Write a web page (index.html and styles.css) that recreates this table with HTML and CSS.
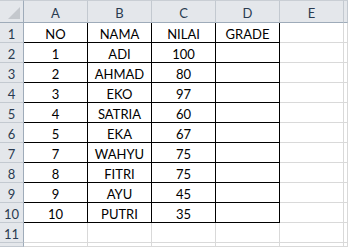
FILE: index.html
```html
<!DOCTYPE html>
<html>
<head>
<meta charset="utf-8">
<link rel="stylesheet" href="styles.css">
</head>
<body>
<div class="sheet">
  <div class="corner"><svg class="tri" width="12" height="12" viewBox="0 0 12 12"><polygon points="12,0 12,12 0,12" fill="#c4c8cd"/></svg></div>
  <div class="ch">A</div><div class="ch">B</div><div class="ch">C</div><div class="ch">D</div><div class="ch">E</div><div class="ch last"></div>

  <div class="rh">1</div><div class="c b">NO</div><div class="c b">NAMA</div><div class="c b">NILAI</div><div class="c b">GRADE</div><div class="c"></div><div class="c"></div>
  <div class="rh">2</div><div class="c b">1</div><div class="c b">ADI</div><div class="c b">100</div><div class="c b"></div><div class="c"></div><div class="c"></div>
  <div class="rh">3</div><div class="c b">2</div><div class="c b">AHMAD</div><div class="c b">80</div><div class="c b"></div><div class="c"></div><div class="c"></div>
  <div class="rh">4</div><div class="c b">3</div><div class="c b">EKO</div><div class="c b">97</div><div class="c b"></div><div class="c"></div><div class="c"></div>
  <div class="rh">5</div><div class="c b">4</div><div class="c b">SATRIA</div><div class="c b">60</div><div class="c b"></div><div class="c"></div><div class="c"></div>
  <div class="rh">6</div><div class="c b">5</div><div class="c b">EKA</div><div class="c b">67</div><div class="c b"></div><div class="c"></div><div class="c"></div>
  <div class="rh">7</div><div class="c b">7</div><div class="c b">WAHYU</div><div class="c b">75</div><div class="c b"></div><div class="c"></div><div class="c"></div>
  <div class="rh">8</div><div class="c b">8</div><div class="c b">FITRI</div><div class="c b">75</div><div class="c b"></div><div class="c"></div><div class="c"></div>
  <div class="rh">9</div><div class="c b">9</div><div class="c b">AYU</div><div class="c b">45</div><div class="c b"></div><div class="c"></div><div class="c"></div>
  <div class="rh">10</div><div class="c b">10</div><div class="c b">PUTRI</div><div class="c b">35</div><div class="c b"></div><div class="c"></div><div class="c"></div>
  <div class="rh">11</div><div class="c"></div><div class="c"></div><div class="c"></div><div class="c"></div><div class="c"></div><div class="c"></div>
  <div class="rh"></div><div class="c"></div><div class="c"></div><div class="c"></div><div class="c"></div><div class="c"></div><div class="c"></div>
</div>
</body>
</html>
```

FILE: styles.css
```css
html, body {
  margin: 0;
  padding: 0;
  background: #ffffff;
  overflow: hidden;
}

.sheet {
  width: 348px;
  height: 247px;
  display: grid;
  grid-template-columns: 24px repeat(5, 64px) 1fr;
  grid-template-rows: 23px repeat(11, 20px) 1fr;
  font-family: Lato, "Liberation Sans", sans-serif;
  font-size: 13px;
  color: #000000;
}

.sheet > div {
  box-sizing: border-box;
  display: flex;
  align-items: center;
  justify-content: center;
  padding-top: 2px;
  overflow: hidden;
  white-space: nowrap;
}

.corner {
  position: relative;
  background: #e4e7eb;
  border-top: 1px solid #c9ced4;
  border-right: 1px solid #9eabb9;
  border-bottom: 1px solid #9eabb9;
}

.tri {
  position: absolute;
  right: 3px;
  bottom: 3px;
}

.ch {
  background: #e4e7eb;
  border-top: 1px solid #c9ced4;
  border-right: 1px solid #c3c9d0;
  border-bottom: 1px solid #9eabb9;
  color: #2a3b50;
}

.rh {
  background: #e4e7eb;
  border-right: 1px solid #9eabb9;
  border-bottom: 1px solid #c3c9d0;
  color: #2a3b50;
}

.c {
  border-right: 1px solid #d9d9d9;
  border-bottom: 1px solid #d9d9d9;
}

.c.b {
  border-right-color: #000000;
  border-bottom-color: #000000;
}
```
